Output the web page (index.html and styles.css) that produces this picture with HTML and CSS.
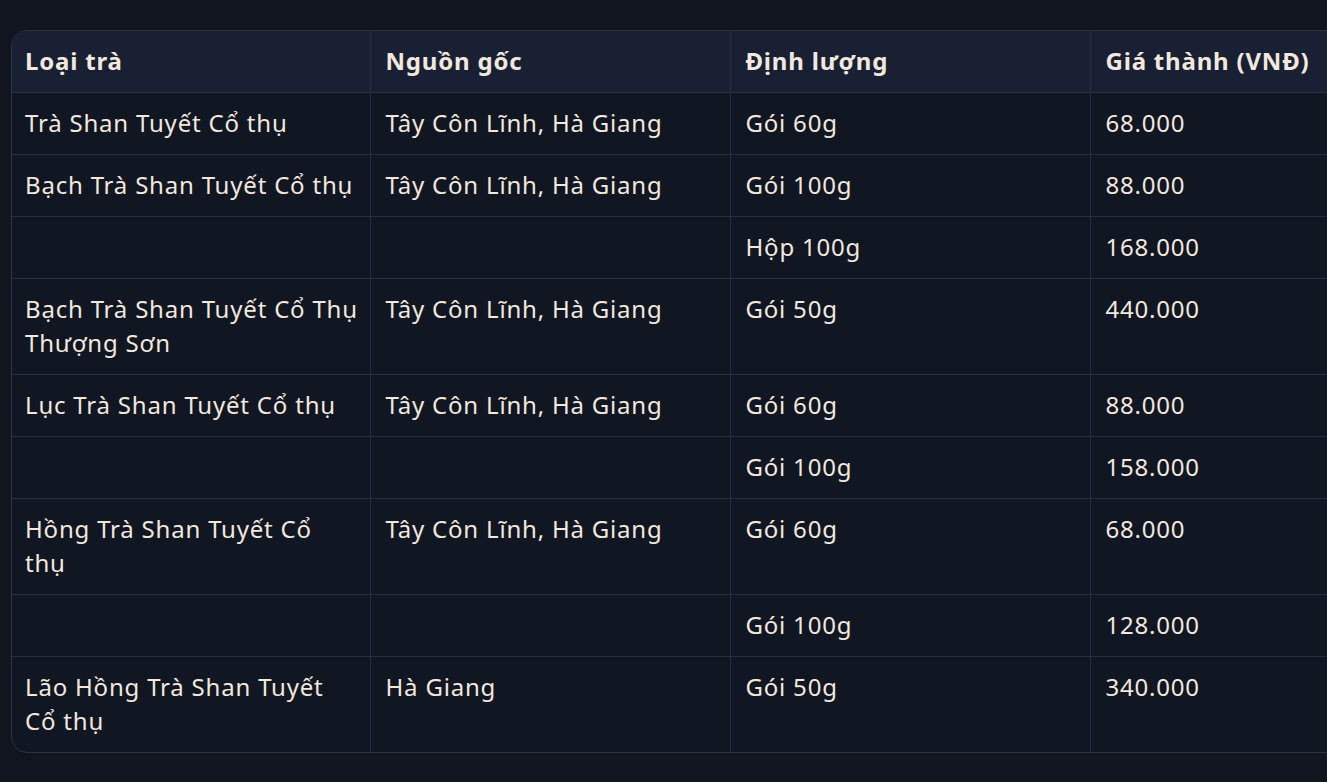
FILE: index.html
```html
<!DOCTYPE html>
<html lang="vi">
<head>
<meta charset="utf-8">
<title>Bảng giá trà</title>
<link rel="stylesheet" href="styles.css">
</head>
<body>
<div class="page">
  <div class="table-wrap">
    <table class="tea">
      <colgroup><col class="c1"><col class="c"><col class="c"><col class="c"></colgroup>
      <thead>
        <tr><th>Loại trà</th><th>Nguồn gốc</th><th>Định lượng</th><th>Giá thành (VNĐ)</th></tr>
      </thead>
      <tbody>
        <tr><td>Trà Shan Tuyết Cổ thụ</td><td>Tây Côn Lĩnh, Hà Giang</td><td>Gói 60g</td><td>68.000</td></tr>
        <tr><td>Bạch Trà Shan Tuyết Cổ thụ</td><td>Tây Côn Lĩnh, Hà Giang</td><td>Gói 100g</td><td>88.000</td></tr>
        <tr><td></td><td></td><td>Hộp 100g</td><td>168.000</td></tr>
        <tr><td>Bạch Trà Shan Tuyết Cổ Thụ Thượng Sơn</td><td>Tây Côn Lĩnh, Hà Giang</td><td>Gói 50g</td><td>440.000</td></tr>
        <tr><td>Lục Trà Shan Tuyết Cổ thụ</td><td>Tây Côn Lĩnh, Hà Giang</td><td>Gói 60g</td><td>88.000</td></tr>
        <tr><td></td><td></td><td>Gói 100g</td><td>158.000</td></tr>
        <tr><td>Hồng Trà Shan Tuyết Cổ thụ</td><td>Tây Côn Lĩnh, Hà Giang</td><td>Gói 60g</td><td>68.000</td></tr>
        <tr><td></td><td></td><td>Gói 100g</td><td>128.000</td></tr>
        <tr><td>Lão Hồng Trà Shan Tuyết Cổ thụ</td><td>Hà Giang</td><td>Gói 50g</td><td>340.000</td></tr>
      </tbody>
    </table>
  </div>
</div>
</body>
</html>
```
FILE: styles.css
```css
html, body {
  margin: 0;
  padding: 0;
  background: #10151f;
  overflow: hidden;
}
.page {
  width: 1327px;
  height: 782px;
  overflow: hidden;
  padding: 30px 0 0 11px;
  box-sizing: border-box;
}
.table-wrap {
  width: 1440px;
  border: 1px solid #2b3244;
  border-radius: 16px;
  overflow: hidden;
  background: #111623;
}
.tea {
  border-collapse: collapse;
  width: 1438px;
  table-layout: fixed;
  font-family: "Noto Sans", sans-serif;
  font-size: 24px;
  letter-spacing: 0.8px;
  line-height: 34px;
  color: #f2e8de;
}
.c1 { width: 358px; }
.c { width: 360px; }
.tea th, .tea td {
  padding: 13px 10px 14px 13px;
  text-align: left;
  vertical-align: top;
  border-right: 1px solid #262d3d;
  border-bottom: 1px solid #262d3d;
}
.tea th + th, .tea td + td { padding-left: 15px; }
.tea tr > :last-child { border-right: none; }
.tea tbody tr:last-child td { border-bottom: none; }
.tea th {
  font-weight: 700;
  background: #192033;
  border-bottom-color: #2b3244;
}
```
